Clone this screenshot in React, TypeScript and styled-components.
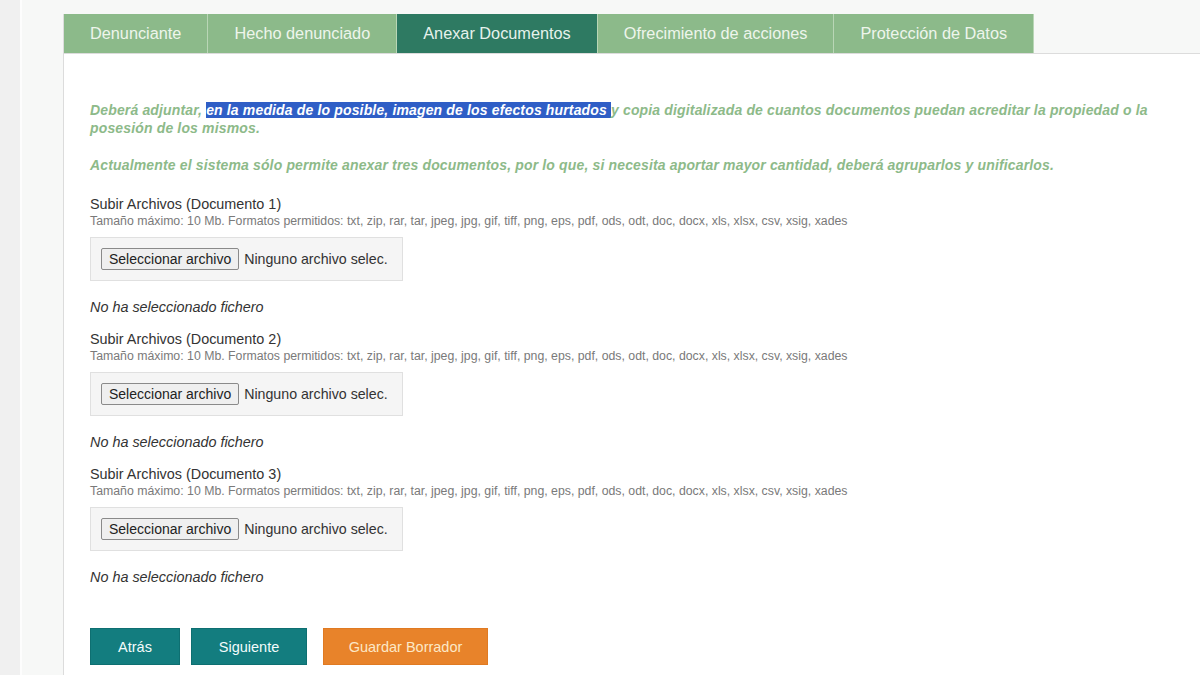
import React from "react";
import styled, { createGlobalStyle } from "styled-components";

const GlobalStyle = createGlobalStyle`
  html, body {
    margin: 0;
    padding: 0;
    background: #f7f8f7;
    font-family: "Liberation Sans", Arial, sans-serif;
  }
`;

const Page = styled.div`
  display: flex;
  flex-direction: row;
  width: 1200px;
  height: 675px;
  overflow: hidden;
  background: #f7f8f7;
`;

const SideStrip = styled.div`
  width: 20px;
  background: #f0f0f0;
  border-right: 2px solid #fdfdfd;
`;

const Gutter = styled.div`
  width: 41px;
`;

const Main = styled.div`
  flex: 1;
  display: flex;
  flex-direction: column;
`;

const TabBar = styled.div`
  display: flex;
  flex-direction: row;
  margin-top: 14px;
  border-bottom: 1px solid #dcdcdc;
  border-left: 1px solid #dcdcdc;
`;

const Tab = styled.div<{ $active?: boolean }>`
  height: 39px;
  display: flex;
  align-items: center;
  padding: 0 26px;
  font-size: 16.3px;
  color: ${(p) => (p.$active ? "#e6f2ec" : "#eef5ec")};
  background: ${(p) => (p.$active ? "#2e7a62" : "#8cba8a")};
  border-right: 1px solid #b9d6b6;
`;

const Panel = styled.div`
  flex: 1;
  background: #ffffff;
  border-left: 1px solid #dcdcdc;
  padding: 47px 26px 0 26px;
`;

const Notice = styled.p`
  margin: 0 0 19px 0;
  font-size: 14px;
  line-height: 18px;
  letter-spacing: 0.15px;
  font-weight: bold;
  font-style: italic;
  color: #8dba89;
`;

const Highlight = styled.span`
  background: #2f5ec6;
  color: #ffffff;
`;

const UploadList = styled.div`
  margin-top: 21px;
`;

const UploadBlock = styled.div`
  display: flex;
  flex-direction: column;
  margin-top: 14px;
`;

const UploadLabel = styled.div`
  font-size: 14.4px;
  line-height: 18px;
  color: #333333;
`;

const UploadHint = styled.div`
  font-size: 12.3px;
  line-height: 16px;
  color: #7a7a7a;
`;

const FileBox = styled.div`
  display: flex;
  align-items: center;
  width: 291px;
  height: 42px;
  margin-top: 8px;
  padding: 0 10px;
  background: #f5f5f5;
  border: 1px solid #e0e0e0;
  white-space: nowrap;
`;

const FileButton = styled.button`
  flex-shrink: 0;
  height: 22px;
  padding: 0 7px;
  font-family: "Liberation Sans", Arial, sans-serif;
  font-size: 14px;
  white-space: nowrap;
  color: #222222;
  background: #efefef;
  border: 1px solid #8a8a8a;
  border-radius: 2px;
`;

const FileName = styled.span`
  margin-left: 5px;
  font-size: 14.2px;
  color: #333333;
`;

const EmptyNote = styled.div`
  margin-top: 18px;
  font-size: 14.4px;
  line-height: 17px;
  font-style: italic;
  color: #333333;
`;

const Actions = styled.div`
  display: flex;
  flex-direction: row;
  gap: 11px;
  margin-top: 42px;
`;

const ActionButton = styled.button<{ $variant?: "teal" | "orange"; $w: number }>`
  width: ${(p) => p.$w}px;
  height: 37px;
  margin-left: ${(p) => (p.$variant === "orange" ? "5px" : "0")};
  padding: 0;
  font-family: "Liberation Sans", Arial, sans-serif;
  font-size: 14.5px;
  color: ${(p) => (p.$variant === "orange" ? "#fce8c6" : "#f2fbfb")};
  background: ${(p) => (p.$variant === "orange" ? "#e8832a" : "#137d7f")};
  border: 1px solid ${(p) => (p.$variant === "orange" ? "#e07a22" : "#0e6f71")};
  border-radius: 0;
`;

const tabs = [
  "Denunciante",
  "Hecho denunciado",
  "Anexar Documentos",
  "Ofrecimiento de acciones",
  "Protección de Datos",
];

const formats =
  "Tamaño máximo: 10 Mb. Formatos permitidos: txt, zip, rar, tar, jpeg, jpg, gif, tiff, png, eps, pdf, ods, odt, doc, docx, xls, xlsx, csv, xsig, xades";

export default function App() {
  return (
    <>
      <GlobalStyle />
      <Page>
        <SideStrip />
        <Gutter />
        <Main>
          <TabBar>
            {tabs.map((t) => (
              <Tab key={t} $active={t === "Anexar Documentos"}>
                {t}
              </Tab>
            ))}
          </TabBar>
          <Panel>
            <Notice>
              Deberá adjuntar, <Highlight>en la medida de lo posible, imagen de los efectos hurtados </Highlight>y
              copia digitalizada de cuantos documentos puedan acreditar la propiedad o la posesión de los mismos.
            </Notice>
            <Notice>
              Actualmente el sistema sólo permite anexar tres documentos, por lo que, si necesita aportar mayor
              cantidad, deberá agruparlos y unificarlos.
            </Notice>
            <UploadList>
              {[1, 2, 3].map((n) => (
                <UploadBlock key={n}>
                  <UploadLabel>Subir Archivos (Documento {n})</UploadLabel>
                  <UploadHint>{formats}</UploadHint>
                  <FileBox>
                    <FileButton>Seleccionar archivo</FileButton>
                    <FileName>Ninguno archivo selec.</FileName>
                  </FileBox>
                  <EmptyNote>No ha seleccionado fichero</EmptyNote>
                </UploadBlock>
              ))}
            </UploadList>
            <Actions>
              <ActionButton $variant="teal" $w={90}>Atrás</ActionButton>
              <ActionButton $variant="teal" $w={116}>Siguiente</ActionButton>
              <ActionButton $variant="orange" $w={165}>Guardar Borrador</ActionButton>
            </Actions>
          </Panel>
        </Main>
      </Page>
    </>
  );
}
